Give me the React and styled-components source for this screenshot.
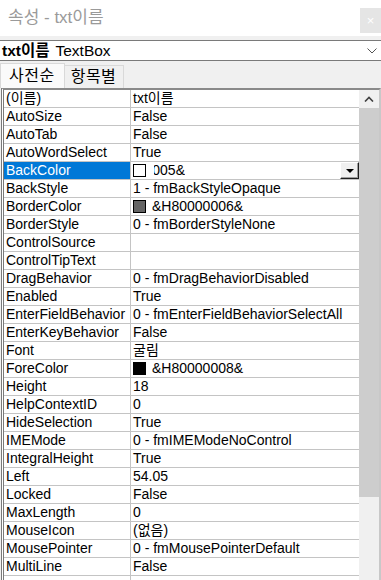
import React from "react";
import styled, { createGlobalStyle } from "styled-components";

const Global = createGlobalStyle`
  html, body { margin: 0; padding: 0; background: #ffffff; }
  body { font-family: "Liberation Sans", "Noto Sans CJK KR", sans-serif; overflow: hidden; }
  * { box-sizing: border-box; }
`;

const Window = styled.div`
  width: 381px;
  height: 580px;
  display: flex;
  flex-direction: column;
  background: #f0f0f0;
  overflow: hidden;
`;

const TitleBar = styled.div`
  height: 36px;
  flex: none;
  background: #ffffff;
  display: flex;
  align-items: center;
  justify-content: space-between;
  padding-left: 8px;
`;

const Title = styled.div`
  font-size: 17px;
  color: #9a9a9a;
  line-height: 20px;
`;

const CloseBtn = styled.div`
  width: 21px;
  height: 25px;
  align-self: flex-start;
  margin-top: 8px;
  background: #e5e5e5;
  color: #ffffff;
  font-size: 13px;
  display: flex;
  align-items: center;
  justify-content: center;
`;

const Band = styled.div`
  height: 4px;
  flex: none;
  background: #f0f0f0;
`;

const Combo = styled.div`
  height: 21px;
  flex: none;
  background: #ffffff;
  border-top: 1px solid #7a7a7a;
  border-bottom: 1px solid #7a7a7a;
  display: flex;
  align-items: center;
  padding-left: 2px;
  padding-right: 4px;
  font-size: 15.5px;
  line-height: 19px;
  color: #000;
`;

const ComboName = styled.b`
  font-weight: 700;
`;

const ComboType = styled.span`
  margin-left: 6px;
  flex: 1;
`;

const TabStrip = styled.div`
  height: 27px;
  flex: none;
  display: flex;
  align-items: flex-end;
  background: #f0f0f0;
  padding-top: 2px;
`;

const Tab = styled.div`
  height: ${(p) => (p.$active ? "25px" : "23px")};
  padding: 0 ${(p) => (p.$active ? "9px" : "7px")} 0 ${(p) => (p.$active ? "8px" : "6px")};
  background: ${(p) => (p.$active ? "#fafafa" : "#f0f0f0")};
  border: 1px solid #d9d9d9;
  border-bottom: none;
  ${(p) => (!p.$active ? "border-left: none;" : "")}
  font-size: 16px;
  letter-spacing: 0.5px;
  line-height: 22px;
  color: #000;
  display: flex;
  align-items: center;
`;

const Grid = styled.div`
  flex: 1;
  min-height: 0;
  display: flex;
  margin-left: 1px;
  border-left: 3px double #7a7a7a;
  border-top: 2px solid #8a8a8a;
  border-right: 2px solid #c8c8c8;
  background: #ffffff;
  overflow: hidden;
`;

const Rows = styled.div`
  width: 355px;
  flex: none;
  display: flex;
  flex-direction: column;
`;

const Row = styled.div`
  height: 18px;
  flex: none;
  display: grid;
  grid-template-columns: 126px 1px 228px;
  border-bottom: 1px solid #c4c4c4;
  font-size: 14px;
  line-height: 17px;
  color: #000;
`;

const NameCell = styled.div`
  padding-left: 2px;
  white-space: nowrap;
  overflow: hidden;
  background: ${(p) => (p.$selected ? "#0078d7" : "transparent")};
  color: ${(p) => (p.$selected ? "#ffffff" : "#000000")};
`;

const Divider = styled.div`
  background: #c4c4c4;
`;

const ValueCell = styled.div`
  padding-left: 2px;
  white-space: nowrap;
  overflow: hidden;
  display: flex;
  align-items: center;
`;

const Swatch = styled.span`
  width: 13px;
  height: 13px;
  flex: none;
  background: ${(p) => p.$color};
  border: 1px solid #000;
  margin-right: 6px;
`;

const ClippedText = styled.span`
  width: 31px;
  margin-left: 2px;
  overflow: hidden;
  display: flex;
  justify-content: flex-end;
  flex: none;
`;

const DropBtn = styled.div`
  margin-left: auto;
  width: 19px;
  height: 17px;
  flex: none;
  background: #f0f0f0;
  border-top: 1px solid #ffffff;
  border-left: 1px solid #ffffff;
  border-right: 1px solid #202020;
  border-bottom: 1px solid #202020;
  box-shadow: inset -1px -1px 0 #a0a0a0;
  display: flex;
  align-items: center;
  justify-content: center;
`;

const Triangle = styled.span`
  width: 0;
  height: 0;
  border-left: 4px solid transparent;
  border-right: 4px solid transparent;
  border-top: 4px solid #000;
  margin-top: 1px;
`;

const Scrollbar = styled.div`
  width: 20px;
  flex: none;
  display: flex;
  flex-direction: column;
  background: #f0f0f0;
`;

const ScrollBtn = styled.div`
  height: 18px;
  flex: none;
  display: flex;
  align-items: center;
  justify-content: center;
`;

const Thumb = styled.div`
  height: 389px;
  flex: none;
  background: #cdcdcd;
`;

const rows = [
  ["(이름)", "txt이름"],
  ["AutoSize", "False"],
  ["AutoTab", "False"],
  ["AutoWordSelect", "True"],
  ["BackColor", "&H80000005&", { swatch: "#ffffff", selected: true, clip: true }],
  ["BackStyle", "1 - fmBackStyleOpaque"],
  ["BorderColor", "&H80000006&", { swatch: "#646464" }],
  ["BorderStyle", "0 - fmBorderStyleNone"],
  ["ControlSource", ""],
  ["ControlTipText", ""],
  ["DragBehavior", "0 - fmDragBehaviorDisabled"],
  ["Enabled", "True"],
  ["EnterFieldBehavior", "0 - fmEnterFieldBehaviorSelectAll"],
  ["EnterKeyBehavior", "False"],
  ["Font", "굴림"],
  ["ForeColor", "&H80000008&", { swatch: "#000000" }],
  ["Height", "18"],
  ["HelpContextID", "0"],
  ["HideSelection", "True"],
  ["IMEMode", "0 - fmIMEModeNoControl"],
  ["IntegralHeight", "True"],
  ["Left", "54.05"],
  ["Locked", "False"],
  ["MaxLength", "0"],
  ["MouseIcon", "(없음)"],
  ["MousePointer", "0 - fmMousePointerDefault"],
  ["MultiLine", "False"],
  ["", ""],
];

export default function App() {
  return (
    <>
      <Global />
      <Window>
        <TitleBar>
          <Title>속성 - txt이름</Title>
          <CloseBtn>×</CloseBtn>
        </TitleBar>
        <Band />
        <Combo>
          <ComboName>txt이름</ComboName>
          <ComboType>TextBox</ComboType>
          <svg width="10" height="6" viewBox="0 0 10 6">
            <path d="M0.5 0.5 L5 5 L9.5 0.5" fill="none" stroke="#555" strokeWidth="1" />
          </svg>
        </Combo>
        <TabStrip>
          <Tab $active>사전순</Tab>
          <Tab>항목별</Tab>
        </TabStrip>
        <Grid>
          <Rows>
            {rows.map(([name, value, opt = {}], i) => (
              <Row key={i}>
                <NameCell $selected={opt.selected}>{name}</NameCell>
                <Divider />
                <ValueCell>
                  {opt.swatch && <Swatch $color={opt.swatch} />}
                  {opt.clip ? <ClippedText>{value}</ClippedText> : value}
                  {opt.selected && (
                    <DropBtn>
                      <Triangle />
                    </DropBtn>
                  )}
                </ValueCell>
              </Row>
            ))}
          </Rows>
          <Scrollbar>
            <ScrollBtn>
              <svg width="10" height="6" viewBox="0 0 10 6">
                <path d="M1 5.5 L5 1.5 L9 5.5" fill="none" stroke="#404040" strokeWidth="1.6" />
              </svg>
            </ScrollBtn>
            <Thumb />
          </Scrollbar>
        </Grid>
      </Window>
    </>
  );
}
